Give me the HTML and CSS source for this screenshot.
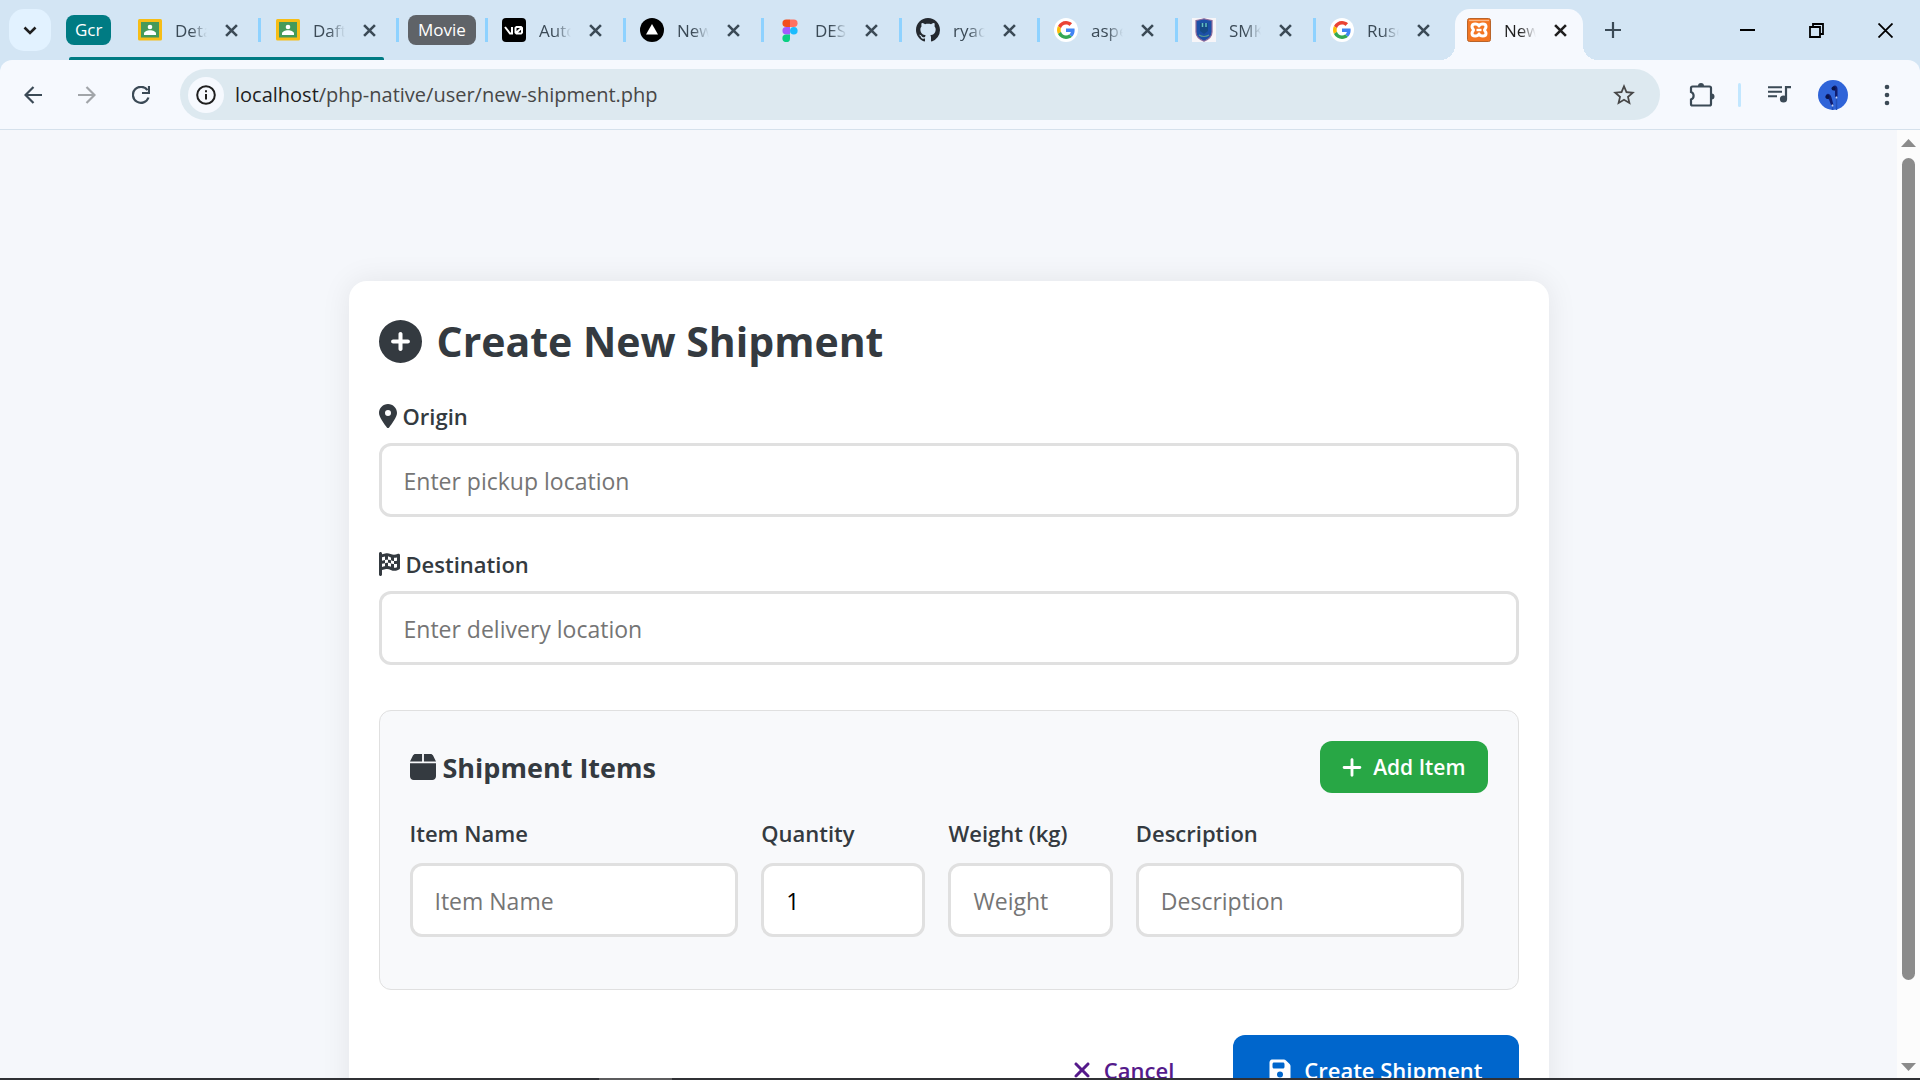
FILE: index.html
```html
<!DOCTYPE html>
<html lang="en">
<head>
<meta charset="utf-8">
<meta name="viewport" content="width=device-width, initial-scale=1">
<title>New Shipment</title>
<link rel="stylesheet" href="styles.css">
</head>
<body>
<svg class="defs" aria-hidden="true">
  <symbol id="x" viewBox="0 0 12 12"><path d="M1 1l10 10M11 1L1 11" fill="none" stroke="currentColor" stroke-width="2.4"/></symbol>
  <symbol id="classroom" viewBox="0 0 24 24"><rect y="1" width="24" height="21.500" rx="1.500" fill="#f6bd16"/><rect x="3" y="4" width="18" height="15.500" fill="#459a5a"/><circle cx="12" cy="9" r="2.300" fill="#fff"/><path d="M6 17v-1.500c0-2 3-3.300 6-3.300s6 1.300 6 3.300V17z" fill="#fff"/></symbol>
  <symbol id="google" viewBox="0 0 24 24"><circle cx="12" cy="12" r="12" fill="#fff"/><g transform="translate(3 3) scale(.375)"><path fill="#ea4335" d="M24 9.500c3.540 0 6.710 1.220 9.210 3.600l6.850-6.850C35.900 2.380 30.470 0 24 0 14.620 0 6.510 5.380 2.560 13.220l7.980 6.190C12.430 13.720 17.740 9.500 24 9.500z"/><path fill="#4285f4" d="M46.980 24.550c0-1.570-.15-3.090-.38-4.550H24v9.020h12.940c-.58 2.960-2.260 5.480-4.780 7.180l7.730 6c4.510-4.180 7.090-10.360 7.090-17.650z"/><path fill="#fbbc05" d="M10.530 28.590c-.48-1.450-.76-2.990-.76-4.590s.27-3.140.76-4.590l-7.980-6.190C.92 16.460 0 20.120 0 24s.92 7.540 2.560 10.780l7.970-6.190z"/><path fill="#34a853" d="M24 48c6.480 0 11.930-2.130 15.890-5.810l-7.730-6c-2.150 1.450-4.920 2.300-8.160 2.300-6.260 0-11.570-4.220-13.470-9.910l-7.980 6.190C6.510 42.620 14.620 48 24 48z"/></g></symbol>
</svg>

<header class="browser">
  <div class="tabstrip">
    <button class="tab-search" aria-label="Search tabs"><svg width="14" height="9" viewBox="0 0 14 9"><path d="M1.500 1.500L7 7l5.500-5.500" fill="none" stroke="#1f1f1f" stroke-width="2.600"/></svg></button>
    <div class="group">
      <button class="chip chip-teal">Gcr</button>
      <div class="tab"><svg class="fav"><use href="#classroom"/></svg><span class="tab-title">Deta</span><button class="tab-close" aria-label="Close"><svg><use href="#x"/></svg></button></div>
      <div class="tab"><svg class="fav"><use href="#classroom"/></svg><span class="tab-title">Daft</span><button class="tab-close" aria-label="Close"><svg><use href="#x"/></svg></button></div>
    </div>
    <div class="chip-wrap"><button class="chip chip-grey">Movie</button></div>
    <div class="tab"><svg class="fav" viewBox="0 0 24 24"><rect width="24" height="24" rx="4" fill="#000"/><path d="M3 9l5 6.500h2V9M13.500 10v4.500l1 1h4.500l1-1V10l-1-1h-4.500zM13.500 15.500l6.500-6" fill="none" stroke="#fff" stroke-width="2"/></svg><span class="tab-title">Auto</span><button class="tab-close" aria-label="Close"><svg><use href="#x"/></svg></button></div>
    <div class="tab"><svg class="fav" viewBox="0 0 24 24"><circle cx="12" cy="12" r="12" fill="#000"/><path d="M12 6l6 10.500H6z" fill="#fff"/></svg><span class="tab-title">New</span><button class="tab-close" aria-label="Close"><svg><use href="#x"/></svg></button></div>
    <div class="tab"><svg class="fav" viewBox="0 0 24 24"><path d="M12 1.500H8.200a3.700 3.700 0 000 7.500H12z" fill="#f24e1e"/><path d="M12 1.500h3.800a3.700 3.700 0 010 7.500H12z" fill="#ff7262"/><path d="M12 9H8.200a3.700 3.700 0 000 7.500H12z" fill="#a259ff"/><circle cx="15.800" cy="12.700" r="3.800" fill="#1abcfe"/><path d="M8.200 16.500H12v3.700a3.800 3.800 0 11-3.800-3.700z" fill="#0acf83"/></svg><span class="tab-title">DES</span><button class="tab-close" aria-label="Close"><svg><use href="#x"/></svg></button></div>
    <div class="tab"><svg class="fav" viewBox="0 0 16 16"><path fill="#24292f" d="M8 0C3.580 0 0 3.580 0 8c0 3.540 2.290 6.530 5.470 7.590.4.070.55-.17.55-.38 0-.19-.01-.82-.01-1.490-2.010.37-2.530-.49-2.690-.94-.09-.23-.48-.94-.82-1.130-.28-.15-.68-.52-.01-.53.63-.01 1.080.58 1.230.82.72 1.210 1.870.87 2.330.66.07-.52.28-.87.51-1.070-1.780-.2-3.640-.89-3.640-3.950 0-.87.31-1.590.82-2.150-.08-.2-.36-1.020.08-2.120 0 0 .67-.21 2.200.82.64-.18 1.320-.27 2-.27s1.360.09 2 .27c1.530-1.040 2.200-.82 2.200-.82.44 1.100.16 1.920.08 2.120.51.56.82 1.270.82 2.150 0 3.070-1.870 3.750-3.650 3.950.29.25.54.73.54 1.480 0 1.070-.01 1.930-.01 2.200 0 .21.15.46.55.38A8.010 8.010 0 0016 8c0-4.420-3.580-8-8-8z"/></svg><span class="tab-title">ryad</span><button class="tab-close" aria-label="Close"><svg><use href="#x"/></svg></button></div>
    <div class="tab"><svg class="fav"><use href="#google"/></svg><span class="tab-title">aspe</span><button class="tab-close" aria-label="Close"><svg><use href="#x"/></svg></button></div>
    <div class="tab"><svg class="fav" viewBox="0 0 24 24"><path fill="#f7f5f8" d="M0 0h24v24H0z"/><path d="M4 2.500Q8 2 12 .8 16 2 20 2.500V14q0 6-8 9.200Q4 20 4 14z" fill="#1c50a8" stroke="#8d6a9c" stroke-width="1.200"/><path d="M8 5h8v8l-4 3-4-3z" fill="#154a86"/><path d="M10.500 5v4M14 5v4" stroke="#63c0c4" stroke-width="1.500"/><path d="M7 17q5 3 10 0" stroke="#5a9a8e" stroke-width="1.200" fill="none"/></svg><span class="tab-title">SMK</span><button class="tab-close" aria-label="Close"><svg><use href="#x"/></svg></button></div>
    <div class="tab tab-last"><svg class="fav"><use href="#google"/></svg><span class="tab-title">Ruse</span><button class="tab-close" aria-label="Close"><svg><use href="#x"/></svg></button></div>
    <div class="tab tab-active"><svg class="fav" viewBox="0 0 24 24"><rect x=".5" y=".5" width="23" height="23" rx="2" fill="#f37623" stroke="#b9642a"/><path d="M2 2.500h20" stroke="#f9b98a" stroke-width="1.200"/><path d="M12 8C11 5.500 5 4.800 5 8.800c0 1.700 1.500 2 1.500 3.200S5 13.500 5 15.200c0 4 6 3.300 7 .8 1 2.500 7 3.200 7-.8 0-1.700-1.500-2-1.500-3.200S19 10.500 19 8.800C19 4.800 13 5.500 12 8z" fill="none" stroke="#fff" stroke-width="3" stroke-linejoin="round"/><path d="M8 12h8" stroke="#f37623" stroke-width="3"/><path d="M9.500 12h5" stroke="#fff" stroke-width="2.400"/></svg><span class="tab-title">New</span><button class="tab-close" aria-label="Close"><svg><use href="#x"/></svg></button></div>
    <button class="icon-btn new-tab" aria-label="New tab"><svg width="16" height="16" viewBox="0 0 16 16"><path d="M8 0v16M0 8h16" stroke="#3b4a56" stroke-width="2.200"/></svg></button>
    <div class="win-controls">
      <button class="icon-btn" aria-label="Minimize"><svg width="15" height="15" viewBox="0 0 15 15"><path d="M0 7h15" stroke="#000" stroke-width="2"/></svg></button>
      <button class="icon-btn" aria-label="Restore"><svg width="15" height="15" viewBox="0 0 15 15"><path d="M1 4h10v10H1zM4 4V1h10v10h-3" fill="none" stroke="#000" stroke-width="1.800"/></svg></button>
      <button class="icon-btn" aria-label="Close window"><svg width="15" height="15" viewBox="0 0 15 15"><path d="M.5.5l14 14M14.500.5l-14 14" stroke="#000" stroke-width="1.800"/></svg></button>
    </div>
  </div>
  <div class="toolbar">
    <div class="nav">
      <button class="icon-btn" aria-label="Back"><svg width="18" height="18" viewBox="0 0 18 18"><path d="M18 9H2M9.500 1L1.500 9l8 8" fill="none" stroke="#3b4a56" stroke-width="2.200"/></svg></button>
      <button class="icon-btn" aria-label="Forward"><svg width="18" height="18" viewBox="0 0 18 18"><path d="M0 9h16M8.500 1l8 8-8 8" fill="none" stroke="#a1a5a9" stroke-width="2.200"/></svg></button>
      <button class="icon-btn" aria-label="Reload"><svg width="18" height="18" viewBox="0 0 18 18"><path d="M16.500 11.500a8 8 0 11-1-7.300" fill="none" stroke="#3b4a56" stroke-width="2.200"/><path d="M17 0v7h-7" fill="none" stroke="#3b4a56" stroke-width="2.200"/></svg></button>
    </div>
    <div class="omnibox">
      <button class="info" aria-label="Site information"><svg width="20" height="20" viewBox="0 0 20 20"><circle cx="10" cy="10" r="8.800" fill="none" stroke="#1f1f1f" stroke-width="2"/><path d="M10 9v5.500M10 5.300v2" stroke="#1f1f1f" stroke-width="2"/></svg></button>
      <p class="url"><span class="host">localhost</span>/php-native/user/new-shipment.php</p>
      <button class="icon-btn star" aria-label="Bookmark"><svg width="24" height="24" viewBox="1 1 22 22"><path fill="#474747" d="M22 9.240l-7.190-.62L12 2 9.190 8.630 2 9.240l5.460 4.730L5.820 21 12 17.270 18.180 21l-1.630-7.030L22 9.240zM12 15.400l-3.760 2.270 1-4.280-3.320-2.880 4.380-.38L12 6.100l1.710 4.040 4.380.38-3.320 2.880 1 4.280L12 15.400z"/></svg></button>
    </div>
    <div class="actions-bar">
      <button class="icon-btn" aria-label="Extensions"><svg width="26" height="26" viewBox="0 0 26 26"><path d="M3.500 4.500h17a1.500 1.500 0 011.500 1.500v16a1.500 1.500 0 01-1.500 1.500h-17A1.500 1.500 0 012 22v-4.500a4 4 0 000-7.500V6a1.500 1.500 0 011.500-1.500z" fill="none" stroke="#3b4a56" stroke-width="2.200"/><path d="M9 4a3 3 0 016 0zM22.500 11.500a3 3 0 010 6z" fill="#3b4a56"/></svg></button>
      <span class="bar-sep"></span>
      <button class="icon-btn" aria-label="Media"><svg width="23" height="17" viewBox="0 0 23 17"><path d="M0 1.200h14M0 5.700h14M0 10.200h9" stroke="#3b4a56" stroke-width="2"/><circle cx="15.500" cy="13" r="3.600" fill="#3b4a56"/><path d="M18 13V1.200h5" fill="none" stroke="#3b4a56" stroke-width="2.200"/></svg></button>
      <button class="icon-btn" aria-label="Profile"><svg width="30" height="30" viewBox="0 0 30 30"><circle cx="15" cy="15" r="15" fill="#2f64d8"/><path d="M18.500 18v12M14.500 26v4" stroke="#2450b8" stroke-width="1.500"/><path d="M14.500 9c0-5 5-4.500 5 0v8h-2.500v-6z" fill="#101d70"/><path d="M7.500 17.500c0-5 4.500-5 6 0l2 7.500H13l-2-5.500z" fill="#101d70"/><circle cx="15.500" cy="8.500" r="2" fill="#0a1448"/><circle cx="9.500" cy="17" r="2" fill="#0a1448"/><path d="M18.500 16.500v2M14.500 24.500v2" stroke="#c9d2ee" stroke-width="1.500"/></svg></button>
      <button class="icon-btn menu" aria-label="Menu"><svg width="6" height="22" viewBox="0 0 6 22"><g fill="#3b4a56"><circle cx="3" cy="3" r="2.300"/><circle cx="3" cy="11" r="2.300"/><circle cx="3" cy="19" r="2.300"/></g></svg></button>
    </div>
  </div>
</header>

<div class="viewport">
  <main class="page">
    <form class="card">
      <h1><svg width="43" height="43" viewBox="0 0 512 512"><path d="M256 512A256 256 0 1 0 256 0a256 256 0 1 0 0 512zM232 344V280H168c-13.300 0-24-10.700-24-24s10.700-24 24-24h64V168c0-13.300 10.700-24 24-24s24 10.700 24 24v64h64c13.300 0 24 10.700 24 24s-10.700 24-24 24H280v64c0 13.300-10.700 24-24 24s-24-10.700-24-24z"/></svg><span>Create New Shipment</span></h1>
      <div class="field">
        <label for="origin"><svg width="18" height="24" viewBox="0 0 384 512"><path d="M215.700 499.200C267 435 384 279.400 384 192C384 86 298 0 192 0S0 86 0 192c0 87.400 117 243 168.300 307.200c12.300 15.300 35.100 15.300 47.400 0zM192 128a64 64 0 1 1 0 128 64 64 0 1 1 0-128z"/></svg><span>Origin</span></label>
        <input id="origin" type="text" placeholder="Enter pickup location">
      </div>
      <div class="field">
        <label for="destination"><svg width="21" height="24" viewBox="0 0 448 512"><path d="M32 0C49.700 0 64 14.300 64 32V48l69-17.200c38.100-9.500 78.300-5.100 113.500 12.500c46.300 23.200 100.800 23.200 147.100 0l9.600-4.800C423.800 28.100 448 43.100 448 66.100V345.800c0 13.300-8.300 25.300-20.800 30l-34.700 13c-46.200 17.300-97.600 14.600-141.700-7.400c-37.900-19-81.300-23.700-122.500-13.400L64 384v96c0 17.700-14.300 32-32 32s-32-14.300-32-32V400 334 64 32C0 14.300 14.300 0 32 0zM64 187.100l64-13.900v65.500L64 252.600V318l48.800-12.200c5.100-1.300 10.100-2.400 15.200-3.300V238.700l38.900-8.400c8.300-1.800 16.700-2.500 25.100-2.100l0-64c13.600 .4 27.200 2.600 40.400 6.400l23.600 6.900v66.700l-41.700-12.300c-7.300-2.100-14.800-3.400-22.300-3.800v71.400c21.800 1.900 43.300 6.700 64 14.400V244.200l22.700 6.700c13.500 4 27.300 6.400 41.300 7.400V194c-7.800-.8-15.600-2.300-23.200-4.500l-40.800-12v-62c-13-3.800-25.800-8.800-38.200-15c-8.200-4.100-16.900-7-25.800-8.800v72.400c-13-.4-26 .8-38.700 3.600L128 173.200V98L64 114v73.100zM320 335.700c16.800 1.500 33.900-.7 50-6.800l14-5.200V251.900l-7.900 1.800c-18.400 4.300-37.300 5.700-56.100 4.500v77.400zm64-149.400V115.400c-20.900 6.100-42.400 9.100-64 9.100V194c13.900 1.400 28 .5 41.700-2.600l22.300-5.200z"/></svg><span>Destination</span></label>
        <input id="destination" type="text" placeholder="Enter delivery location">
      </div>
      <section class="items">
        <div class="items-head">
          <h2><svg width="26" height="30" viewBox="0 0 448 512"><path d="M50.700 58.500L0 160H208V32H93.700C75.500 32 58.900 42.300 50.700 58.500zM240 160H448L397.300 58.500C389.100 42.300 372.500 32 354.300 32H240V160zm208 32H0V416c0 35.300 28.700 64 64 64H384c35.300 0 64-28.700 64-64V192z"/></svg><span>Shipment Items</span></h2>
          <button class="btn btn-add" type="button"><svg width="20" height="23" viewBox="0 0 448 512"><path d="M256 80c0-17.700-14.300-32-32-32s-32 14.300-32 32V224H48c-17.700 0-32 14.300-32 32s14.300 32 32 32H192V432c0 17.700 14.300 32 32 32s32-14.300 32-32V288H400c17.700 0 32-14.300 32-32s-14.300-32-32-32H256V80z"/></svg><span>Add Item</span></button>
        </div>
        <div class="item-row">
          <div class="field"><label for="name">Item Name</label><input id="name" type="text" placeholder="Item Name"></div>
          <div class="field"><label for="qty">Quantity</label><input id="qty" type="number" value="1"></div>
          <div class="field"><label for="weight">Weight (kg)</label><input id="weight" type="number" placeholder="Weight"></div>
          <div class="field"><label for="desc">Description</label><input id="desc" type="text" placeholder="Description"></div>
        </div>
      </section>
      <div class="form-actions">
        <a class="cancel" href="#"><svg width="20" height="24" viewBox="0 0 384 512"><path d="M342.600 150.600c12.500-12.500 12.500-32.800 0-45.300s-32.800-12.500-45.300 0L192 210.700 86.600 105.400c-12.500-12.500-32.800-12.500-45.300 0s-12.500 32.800 0 45.300L146.700 256 41.400 361.400c-12.500 12.500-12.500 32.800 0 45.300s32.800 12.500 45.300 0L192 301.300 297.400 406.600c12.500 12.500 32.800 12.500 45.300 0s12.500-32.800 0-45.300L237.300 256 342.600 150.600z"/></svg><span>Cancel</span></a>
        <button class="btn btn-create" type="submit"><svg width="22" height="24" viewBox="0 0 448 512"><path d="M64 32C28.700 32 0 60.700 0 96V416c0 35.300 28.700 64 64 64H384c35.300 0 64-28.700 64-64V173.300c0-17-6.700-33.300-18.700-45.300L352 50.700C340 38.700 323.700 32 306.700 32H64zm0 96c0-17.700 14.300-32 32-32H288c17.700 0 32 14.300 32 32v64c0 17.700-14.300 32-32 32H96c-17.700 0-32-14.300-32-32V128zM224 288a64 64 0 1 1 0 128 64 64 0 1 1 0-128z"/></svg><span>Create Shipment</span></button>
      </div>
    </form>
  </main>
  <div class="scrollbar" aria-hidden="true">
    <svg width="15" height="8" viewBox="0 0 15 8"><path d="M7.500 0L15 8H0z" fill="#8b8b8b"/></svg>
    <span class="track"><span class="thumb"></span></span>
    <svg width="15" height="8" viewBox="0 0 15 8"><path d="M7.500 8L15 0H0z" fill="#8b8b8b"/></svg>
  </div>
</div>
<footer class="taskbar"><span class="task-active"></span></footer>
</body>
</html>
```
FILE: styles.css
```css
* { box-sizing: border-box; }

body {
  margin: 0;
  height: 100vh;
  display: flex;
  flex-direction: column;
  overflow: hidden;
  background: #f5f7fb;
  color: #343a40;
  font-family: "Open Sans", "Noto Sans", sans-serif;
}

button { border: 0; padding: 0; background: none; font: inherit; color: inherit; }
svg { display: block; flex: none; }
.defs { display: none; }

/* Browser frame */
.browser { flex: none; background: #d3e5f4; }

.tabstrip { display: flex; align-items: center; height: 60px; padding-left: 9px; font-size: 17px; color: #3b4a56; }
.tab-search { width: 42px; height: 42px; display: grid; place-items: center; border-radius: 15px; background: #e2f2ff; margin-right: 15px; }
.group { position: relative; display: flex; align-items: center; height: 60px; }
.group::after { content: ""; position: absolute; left: 3px; right: 15px; bottom: 0; height: 3px; border-radius: 2px 2px 0 0; background: #007b83; }
.chip { height: 30px; padding: 0 9px; border-radius: 8px; color: #fff; line-height: 28px; }
.chip-teal { width: 45px; margin-right: 12px; background: #007b83; }
.chip-grey { width: 68px; background: #5f6368; }
.chip-wrap { display: flex; align-items: center; padding: 0 9px; border-right: 3px solid #8ed2ff; height: 24px; }
.tab { flex: none; display: flex; align-items: center; width: 138px; height: 24px; padding-left: 15px; border-right: 3px solid #8ed2ff; }
.chip-wrap ~ .tab { padding-left: 14px; }
.tab-last { width: 139px; border-right-color: transparent; }
.fav { width: 24px; height: 24px; }
.tab-title {
  width: 32px; margin: 2px 18px 0 13px; overflow: hidden; white-space: nowrap; line-height: 24px;
  -webkit-mask-image: linear-gradient(90deg, #000 50%, transparent);
  mask-image: linear-gradient(90deg, #000 50%, transparent);
}
.tab-close svg { width: 13px; height: 13px; }
.tabstrip .tab-active {
  position: relative; align-self: flex-end; width: 128px; height: 51px; padding: 0 0 9px 12px; border: 0;
  border-radius: 15px 15px 0 0; background: #f6f9fe; color: #1f1f1f;
}
.tab-active::before, .tab-active::after { content: ""; position: absolute; bottom: 0; width: 15px; height: 15px; }
.tab-active::before { right: 100%; background: radial-gradient(circle at 0 0, transparent 15px, #f6f9fe 15px); }
.tab-active::after { left: 100%; background: radial-gradient(circle at 100% 0, transparent 15px, #f6f9fe 15px); }
.new-tab { margin-left: 22px; }
.win-controls { display: flex; gap: 54px; margin-left: auto; padding-right: 27px; }

.toolbar { display: flex; align-items: center; height: 70px; padding: 0 30px 0 24px; border-bottom: 1px solid #d5e1ec; border-radius: 12px 12px 0 0; background: #f6f9fe; }
.nav { display: flex; gap: 36px; margin-right: 30px; }
.omnibox { flex: 1; display: flex; align-items: center; height: 51px; padding: 0 24px 0 8px; border-radius: 26px; background: #dde9f0; }
.info { width: 36px; height: 36px; display: grid; place-items: center; border-radius: 50%; background: #f6f9fe; }
.url { flex: 1; margin: 0 0 0 11px; font-size: 20px; color: #474747; }
.host { color: #1f1f1f; }
.actions-bar { display: flex; align-items: center; margin-left: 29px; gap: 27px; }
.bar-sep { width: 3px; height: 24px; margin-left: -4px; border-radius: 2px; background: #c2e7ff; }
.menu { margin-left: 9px; }

/* Page */
.viewport { flex: 1; min-height: 0; display: flex; overflow: hidden; }
.page { flex: 1; padding-top: 151px; overflow: hidden; }
.scrollbar { width: 23px; display: flex; flex-direction: column; align-items: center; padding: 9px 0 7px; background: #fcfcfc; }
.track { flex: 1; width: 13px; margin: 11px 0; }
.thumb { display: block; height: 92%; border-radius: 7px; background: #8b8b8b; }
.taskbar { flex: none; height: 2px; background: #303135; }
.task-active { display: block; width: 73px; height: 2px; margin-left: 599px; background: #5c5c5e; }

.card { max-width: 1200px; margin: 0 auto; padding: 30px; border-radius: 18px; background: #fff; box-shadow: 0 0 30px rgba(0, 0, 0, .08); }
.card svg { fill: currentColor; }
h1, h2 { margin: 0; display: flex; align-items: center; font-weight: 700; }
h1 { gap: 15px; height: 60px; margin-bottom: 30px; font-size: 41px; }
h2 { gap: 7px; font-size: 27px; }

.field label { display: flex; align-items: center; gap: 6px; height: 30px; margin-bottom: 12px; font-size: 22px; font-weight: 600; }
.field input {
  display: block; width: 100%; height: 74px; padding: 2px 22px 0; border: 3px solid #e0e0e0; border-radius: 12px;
  background: #fff; color: #000; font: 23px "Open Sans", "Noto Sans", sans-serif;
}
.field input::placeholder { color: #757575; }
.field input[type="number"] { appearance: textfield; -moz-appearance: textfield; }
.card > .field { margin-bottom: 32px; }

.items { margin: 45px 0; padding: 30px 30px 52px; border: 1px solid #e0e0e0; border-radius: 12px; background: #f8f9fb; }
.items-head { display: flex; justify-content: space-between; align-items: center; margin-bottom: 25px; }
.item-row { display: grid; grid-template-columns: 2fr 1fr 1fr 2fr; gap: 23px; padding-right: 23px; }
.item-row label { margin-bottom: 15px; }

.btn { display: flex; align-items: center; justify-content: center; border-radius: 12px; color: #fff; font-weight: 600; }
.btn-add { height: 52px; padding: 0 22px; gap: 11px; background: #28a745; font-size: 21px; }
.btn-create { height: 70px; padding: 0 36px; gap: 13px; background: #0066cc; font-size: 22px; }
.form-actions { display: flex; justify-content: flex-end; align-items: center; gap: 59px; }
.cancel { display: flex; align-items: center; gap: 12px; color: #551a8b; text-decoration: none; font-size: 22px; font-weight: 600; }
```
